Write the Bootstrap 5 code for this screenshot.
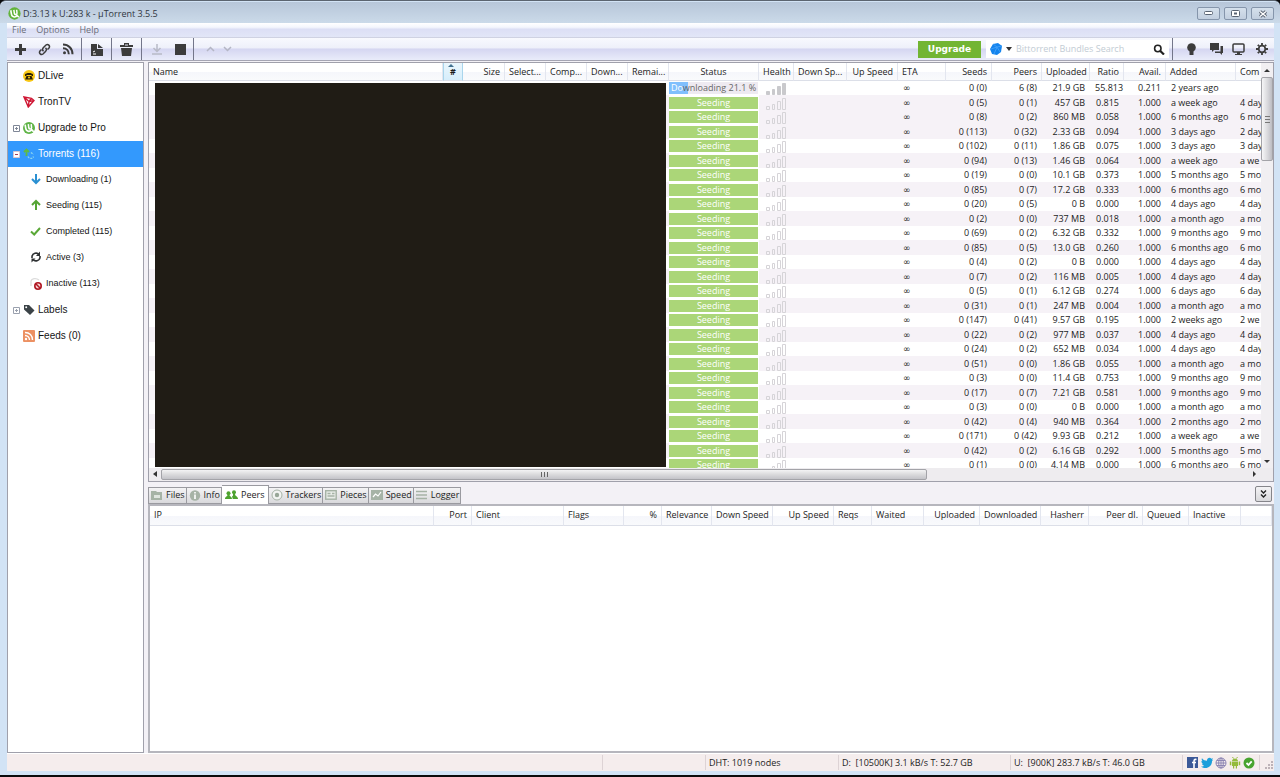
<!DOCTYPE html>
<html lang="en">
<head>
<meta charset="utf-8">
<meta name="viewport" content="width=device-width, initial-scale=1">
<title>µTorrent 3.5.5</title>
<link rel="stylesheet" href="https://cdn.jsdelivr.net/npm/bootstrap@5.3.0/dist/css/bootstrap.min.css">
<style>
  :root { --ui: "Open Sans", "Noto Sans", sans-serif; --ink: #1c1c1c; --edge: #a0a0ab; }
  body { font: 9px/12px var(--ui); color: var(--ink); background: #0a0a0c; height: 100vh; overflow: hidden; padding-bottom: 2px; }
  svg { display: block; flex: none; }
  button { padding: 0; border: 0; background: none; color: inherit; font: inherit; }
  a { color: inherit; text-decoration: none; }
  .frame { background: #d2e3f5; padding: 1px 6px 4px 7px; height: 100%; border-radius: 6px 6px 0 0; border-top: 1px solid #5b6470; }
  .titlebar { height: 21px; margin: 0 -6px 0 -7px; padding: 2px 6px 0 8px; gap: 2px; background: linear-gradient(#b7c6d9, #cbdae9); border-radius: 5px 5px 0 0; color: #30363e; }
  .winbtn { width: 23px; height: 13px; border: 1px solid #8595ab; border-radius: 2px; background: linear-gradient(#d5e0ec, #c2cfdf); }
  .menubar { height: 15px; background: linear-gradient(#fff 0, #f4f6fd 30%, #dcdff5 45%, #e2e6f7); padding-left: 5px; gap: 10px; color: #6c6f78; border-bottom: 1px solid #cfd2e2; }
  .tools { height: 23px; background: linear-gradient(#f8f9fe 0, #eef0fa 45%, #d5d6f1 50%, #e9ecfa); color: #3c3c3c; border-bottom: 1px solid #a5a5b3; }
  .tools button { width: 26px; }
  .tools .vr { width: 1px; background: #73768a; opacity: 1; }
  .upgrade { background: #72b533; color: #fff; font: bold 9px/16px "DejaVu Sans", sans-serif; width: 63px !important; height: 17px; }
  .finder { background: #fff; width: 183px; height: 18px; padding: 0 4px; margin: 0 3px 0 5px; }
  .finder input { border: 0; outline: 0; padding: 0; min-width: 0; font: 9px/14px var(--ui); background: none; }
  .finder input::placeholder { color: #c2ccd4; opacity: 1; }
  .finder button { width: auto; }
  .side { width: 137px; background: #fff; border: 1px solid var(--edge); font: 10px/26px "Liberation Sans", Arial, sans-serif; }
  .side a { height: 26px; padding-left: 5px; gap: 3px; color: #141414; }
  .side .kid { padding-left: 21px; padding-bottom: 2px; font-size: 9px; }
  .side .active { background: #3399fd; color: #fff; }
  .twist { width: 7px; height: 7px; }
  .cols { gap: 4px; background: #f3f1f6; padding-top: 1px; }
  .pane { background: #fff; border: 1px solid var(--edge); }
  .upper { height: 54vh; }
  .grid { table-layout: fixed; width: 100%; border-collapse: separate; border-spacing: 0; white-space: nowrap; }
  .grid th { font-weight: 400; height: 18px; padding: 0 4px; border-right: 1px solid #e3e6ef; border-bottom: 1px solid #dcdfe8; background: linear-gradient(#fff 50%, #f5f6fb 52%, #f9fafc); overflow: hidden; }
  .grid td { height: 15px; padding: 0 5px; line-height: 14px; overflow: hidden; }
  .grid tr:nth-child(odd) td { height: 14px; }
  .grid .tint td { background: #f6f2f7; }
  .grid .sorted { background: linear-gradient(#eaf6fd, #d6eefb); border-left: 1px solid #a9d5ec; border-right-color: #a9d5ec; font-weight: 700; padding: 0 4px; }
  .grid td.statecell { padding: 0 1px 0 0; background: #fff; }
  .grid td.health { padding: 0 0 0 7px; }
  .grid td.eta { font-family: "DejaVu Sans", sans-serif; }
  .state { height: 12px; line-height: 11px; background: #abd678; color: #fff; text-align: center; }
  .loading { background: linear-gradient(to right, #80bffd var(--done), #eeeaf1 var(--done)); color: #666; white-space: nowrap; }
  .loading span { color: #fff; }
  .hidden-names { background: #201c15; left: 6px; right: 607px; top: 20px; bottom: 14px; z-index: 2; }
  .vbar { width: 12px; background: #f1eff2; }
  .hbar { height: 13px; background: #eeecef; padding: 1px 12px 1px 4px; }
  .thumb { border: 1px solid #a3a3a8; border-radius: 2px; }
  .hbar .thumb { width: 766px; background: linear-gradient(#f3f3f4, #dadadc 50%, #c3c3c8); }
  .vbar .thumb { height: 84px; width: 12px; background: linear-gradient(to right, #f6f6f7, #d6d6da 60%, #bcbcc2); }
  .tabs { height: 22px; padding: 5px 2px 0 0; font-size: 9px; }
  .tabs button { height: 17px; padding: 0 1px 0 2px; gap: 3px; border: 1px solid #9a9aa0; border-left-width: 0; background: linear-gradient(#f4f3f5, #d9d9dc); }
  .tabs button:first-child { border-left-width: 1px; }
  .tabs .on { height: 19px; margin-top: -2px; background: #fff; border-bottom: 0; padding: 0 3px; }
  .tabs .collapser { width: 17px; height: 16px; margin-top: -1px; border: 1px solid #85858a; border-radius: 2px; padding: 0; }
  .lower { border-width: 2px; border-color: #b6b6bd; }
  .lower .grid th { height: 20px; }
  .statusbar { background: #f5eded; height: 18px; border-top: 1px solid #fff; }
  .statusbar > * { border-left: 1px solid #ddd3d5; padding-left: 3px; height: 15px; line-height: 15px; }
</style>
</head>
<body>
<div class="frame d-flex flex-column">
  <header class="titlebar d-flex align-items-center">
    <svg width="13" height="13" viewBox="0 0 14 14"><circle cx="7" cy="7" r="6.6" fill="#62b33b"/><path d="M3 3.500l.7 4.200c.8 4 5 3.600 6 1.300l2 2" fill="none" stroke="#fff" stroke-width="1.700"/><path d="M6.300 3l.6 4c.4 1.600 3 1.400 2.800-.5L9.300 3" fill="none" stroke="#fff" stroke-width="1.600"/></svg>
    <span class="me-auto">D:3.13 k U:283 k - µTorrent 3.5.5</span>
    <div class="d-flex gap-1">
      <button class="winbtn d-flex align-items-center justify-content-center" aria-label="Minimize"><svg width="9" height="5"><rect x=".5" y=".5" width="8" height="3" rx="1" fill="#fff" stroke="#596372"/></svg></button>
      <button class="winbtn d-flex align-items-center justify-content-center" aria-label="Maximize"><svg width="9" height="7"><rect x=".5" y=".5" width="8" height="6" rx="1" fill="#fff" stroke="#596372"/><path d="M3 3.500h3" stroke="#596372" stroke-width="2"/></svg></button>
      <button class="winbtn d-flex align-items-center justify-content-center" aria-label="Close"><svg width="10" height="8"><path d="M2 1.500l6 5M8 1.500l-6 5" stroke="#596372" stroke-width="3.400"/><path d="M2 1.500l6 5M8 1.500l-6 5" stroke="#fff" stroke-width="1.500"/></svg></button>
    </div>
  </header>
  <nav class="menubar d-flex align-items-center" aria-label="Menu"><a href="#">File</a><a href="#">Options</a><a href="#">Help</a></nav>

  <div class="tools d-flex align-items-center flex-shrink-0">
    <button class="d-flex justify-content-center" aria-label="Add torrent"><svg width="13" height="13"><path d="M6.500 1v11M1 6.500h11" stroke="currentColor" stroke-width="3"/></svg></button>
    <button class="d-flex justify-content-center" style="width:22px" aria-label="Add from URL"><svg width="13" height="13" viewBox="0 0 13 13" fill="none" stroke="currentColor" stroke-width="1.500"><path d="M5.500 8.200C4 6.800 4.500 5.500 5.500 4.500L8 2c2-1.500 4.500.8 3 3L9.500 6.500"/><path d="M7.500 4.800C9 6.200 8.500 7.500 7.500 8.500L5 11c-2 1.500-4.500-.8-3-3l1.500-1.500"/></svg></button>
    <button class="d-flex justify-content-center" aria-label="Add RSS feed"><svg width="12" height="12" fill="none" stroke="currentColor" stroke-width="2"><circle cx="2.500" cy="9.800" r="1.500" fill="currentColor" stroke="none"/><path d="M1 5.200c3.500 0 5.800 2.500 5.800 6M1 1.500c5.500 0 9.500 4 9.500 9.700"/></svg></button>
    <span class="vr"></span>
    <button class="d-flex justify-content-center" style="width:29px" aria-label="Create torrent"><svg width="12" height="13"><path d="M0 1h6v5h6v7H0zM7 1l5 4H7z" fill="currentColor"/><path d="M2 9l2-1M2 11h3" stroke="#fff"/></svg></button>
    <span class="vr"></span>
    <button class="d-flex justify-content-center" style="width:29px" aria-label="Remove"><svg width="13" height="13"><path d="M0 2h4V0h5v2h4v2H0zM1 5h11l-1 8H2z" fill="currentColor"/><path d="M5 2h3" stroke="#e8e9f7"/></svg></button>
    <span class="vr"></span>
    <button class="d-flex justify-content-center" style="width:29px" aria-label="Start"><svg width="12" height="12" fill="none" stroke="#b8bac6" stroke-width="1.500"><path d="M6 1v7M2.500 5L6 8.500 9.500 5M1 11h10"/></svg></button>
    <button class="d-flex ps-1" style="width:22px" aria-label="Stop"><svg width="11" height="11"><path d="M0 0h11v11H0z" fill="currentColor"/></svg></button>
    <span class="vr"></span>
    <button class="d-flex justify-content-end" style="width:21px" aria-label="Move up"><svg width="9" height="6" fill="none" stroke="#b4b6c4" stroke-width="1.500"><path d="M1 5l3.500-3.500L8 5"/></svg></button>
    <button class="d-flex ms-2 me-auto" aria-label="Move down"><svg width="9" height="6" fill="none" stroke="#b4b6c4" stroke-width="1.500"><path d="M1 1l3.500 3.500L8 1"/></svg></button>
    <button class="upgrade">Upgrade</button>
    <form class="finder d-flex align-items-center" onsubmit="return false">
      <svg width="12" height="12"><path d="M3 1l5-1 4 3-1 6-4 3-5-1-2-5z" fill="#1484ee"/><path d="M3 1l4 3 5-1M7 4l3 5M1 6l6-2-3 7" stroke="#3c9df7" fill="none"/></svg>
      <svg class="mx-1" width="6" height="4"><path d="M0 0h6L3 4z" fill="#333"/></svg>
      <input class="flex-grow-1" type="search" aria-label="Search" placeholder="Bittorrent Bundles Search">
      <button aria-label="Search"><svg width="12" height="11"><circle cx="4.800" cy="4.500" r="3.200" fill="none" stroke="#222" stroke-width="1.600"/><path d="M7 6.800l4 3.700" stroke="#222" stroke-width="2.200"/></svg></button>
    </form>
    <span class="vr"></span>
    <button class="d-flex justify-content-center" style="width:37px" aria-label="Tips"><svg width="9" height="12"><circle cx="4.500" cy="4.500" r="4.300" fill="currentColor"/><path d="M2.500 7h4v5h-4z" fill="currentColor"/></svg></button>
    <button class="d-flex" style="width:22px" aria-label="Chat"><svg width="13" height="12"><path d="M0 0h9v7H4L2 9V7H0z" fill="currentColor"/><path d="M10.500 3H13v7h-1v2l-2-2H5V8.500h5.500z" fill="currentColor"/></svg></button>
    <button class="d-flex" style="width:24px" aria-label="Remote"><svg width="13" height="12"><rect x="1" y="1" width="11" height="8" rx="1" fill="none" stroke="currentColor" stroke-width="1.500"/><path d="M5 9h3v2h2v1H3v-1h2z" fill="currentColor"/></svg></button>
    <button class="d-flex" style="width:18px" aria-label="Preferences"><svg width="12" height="12"><circle cx="6" cy="6" r="3.300" fill="none" stroke="currentColor" stroke-width="1.700"/><path d="M6 0v2M6 10v2M0 6h2M10 6h2M1.800 1.800l1.400 1.400M8.800 8.800l1.400 1.400M10.200 1.800L8.800 3.200M1.800 10.200l1.400-1.400" stroke="currentColor" stroke-width="1.800"/></svg></button>
  </div>

  <div class="cols d-flex flex-grow-1" style="min-height:0">
    <nav class="side flex-shrink-0" aria-label="Categories">
      <a href="#" class="d-flex align-items-center"><span class="twist"></span><svg width="12" height="12"><circle cx="6" cy="6" r="6" fill="#f8c715"/><path d="M2 4.500C3 2.500 9 2.500 10 4.500V6H8.500V5h-5v1H2zM3.500 6h5L10 9.500H2z" fill="#2b2106"/><circle cx="6" cy="7.500" r="1" fill="#f8c715"/></svg>DLive</a>
      <a href="#" class="d-flex align-items-center"><span class="twist"></span><svg width="12" height="12" fill="none" stroke="#cf1633" stroke-width="1.400"><path d="M1 1l7.500 1.300L11 4.500 5.300 11zM1 1l5 4.500M6 5.500l2.500-3.200M6 5.500L11 4.500M6 5.500l-.7 5.500"/></svg>TronTV</a>
      <a href="#" class="d-flex align-items-center"><svg class="twist" viewBox="0 0 7 7"><path d="M.5.5h6v6h-6zM2 3.500h3M3.500 2v3" fill="#fff" stroke="#7f8797"/></svg><svg width="12" height="12" viewBox="0 0 14 14"><circle cx="7" cy="7" r="7" fill="#5fb446"/><path d="M2.500 3l.7 4.500c.8 4.500 5.800 4 7 1.500l2.300 2.500" fill="none" stroke="#fff" stroke-width="1.900"/><path d="M6.200 2.500l.6 4.500c.4 1.800 3.400 1.600 3.200-.5L9.600 2.500" fill="none" stroke="#fff" stroke-width="1.800"/></svg>Upgrade to Pro</a>
      <a href="#" class="active d-flex align-items-center"><svg class="twist" viewBox="0 0 7 7"><path d="M.5.5h6v6h-6z" fill="#fff" stroke="#d8c5cf"/><path d="M2 3.500h3" stroke="#a4405c"/></svg><svg width="12" height="12" fill="none"><path d="M3.500 8V2M1 4l2.500-2.500L6 4" stroke="#5fba45" stroke-width="1.800"/><path d="M8 4.500l2.500 2M5 8.500c1 2.500 5 2.500 5.500 0" stroke="#8bd5ef" stroke-dasharray="2 1" stroke-width="1.300"/></svg>Torrents (116)</a>
      <a href="#" class="kid d-flex align-items-center"><svg width="14" height="12" fill="none" stroke="#2a90d2" stroke-width="2"><path d="M7 1v9M3 6l4 4 4-4"/></svg>Downloading (1)</a>
      <a href="#" class="kid d-flex align-items-center"><svg width="14" height="12" fill="none" stroke="#55a534" stroke-width="2"><path d="M7 11V2M3 6l4-4 4 4"/></svg>Seeding (115)</a>
      <a href="#" class="kid d-flex align-items-center"><svg width="14" height="12" fill="none" stroke="#5aa837" stroke-width="2"><path d="M2 6.500L5.200 9.500 11 3"/></svg>Completed (115)</a>
      <a href="#" class="kid d-flex align-items-center"><svg width="14" height="12" fill="none" stroke="#2e3133" stroke-width="1.600"><path d="M3 7V5.500C3.500 2 8 1 10 3.500M11 5v1.500C10.500 10 6 11 4 8.500"/><path d="M11 .5V5H7zM2.500 11.500V7.500H6.500z" fill="#2e3133" stroke="none"/></svg>Active (3)</a>
      <a href="#" class="kid d-flex align-items-center"><svg width="14" height="13" fill="none"><path d="M2 9V4c.5-2.500 5-3.500 8-1" stroke="#dcdcdc" stroke-width="1.300"/><circle cx="9" cy="9" r="3.200" fill="#f6d5d5" stroke="#b01722" stroke-width="1.600"/><path d="M7 7l4 4" stroke="#b01722" stroke-width="1.600"/></svg>Inactive (113)</a>
      <a href="#" class="d-flex align-items-center"><svg class="twist" viewBox="0 0 7 7"><path d="M.5.5h6v6h-6zM2 3.500h3M3.500 2v3" fill="#fff" stroke="#9aa1ae"/></svg><svg width="12" height="12"><path d="M1 1h5l5.500 5.500-4.500 4.500L1 5.500z" fill="#3b4347"/><circle cx="3.200" cy="3.200" r="1" fill="#fff"/></svg>Labels</a>
      <a href="#" class="d-flex align-items-center"><span class="twist"></span><svg width="12" height="12" fill="none" stroke="#fff" stroke-width="1.400"><rect width="12" height="12" rx="1" fill="#ec9163" stroke="none"/><circle cx="3" cy="9" r="1.200" fill="#fff" stroke="none"/><path d="M2 5.500c2.500 0 4.500 2 4.500 4.500M2 2.500c4.500 0 7.500 3 7.500 7.500"/></svg>Feeds (0)</a>
    </nav>

    <main class="d-flex flex-column flex-grow-1" style="min-width:0">
      <section class="pane upper d-flex flex-column position-relative flex-shrink-0">
        <div class="d-flex flex-grow-1" style="min-height:0">
          <div class="flex-grow-1 overflow-hidden">
            <table class="grid">
              <colgroup id="torrentCols"></colgroup>
              <thead><tr>
                <th>Name</th><th class="sorted text-center position-relative"><svg class="position-absolute top-0" width="6" height="4"><path d="M0 4l3-3 3 3z" fill="#41708f"/></svg>#</th><th class="text-end">Size</th><th>Select...</th><th>Comp...</th><th>Down...</th><th>Remai...</th><th class="text-center">Status</th><th>Health</th><th>Down Sp...</th><th class="text-end">Up Speed</th><th>ETA</th><th class="text-end">Seeds</th><th class="text-end">Peers</th><th class="text-end">Uploaded</th><th class="text-end">Ratio</th><th class="text-end">Avail.</th><th>Added</th><th class="pe-0 border-end-0">Com</th>
              </tr></thead>
              <tbody id="torrents"></tbody>
            </table>
          </div>
          <div class="vbar d-flex flex-column align-items-center flex-shrink-0">
            <svg class="my-1" width="6" height="6"><path d="M0 5l3-3 3 3z" fill="#333"/></svg>
            <div class="thumb d-flex align-items-center justify-content-center"><svg width="5" height="7"><path d="M0 .5h5M0 3.500h5M0 6.500h5" stroke="#777"/></svg></div>
            <svg class="mt-auto mb-1" width="6" height="4"><path d="M0 0h6L3 3z" fill="#333"/></svg>
          </div>
        </div>
        <div class="hbar d-flex align-items-center flex-shrink-0">
          <svg class="me-1" width="4" height="6"><path d="M4 0v6L0 3z" fill="#333"/></svg>
          <div class="thumb h-100 d-flex align-items-center justify-content-center"><svg width="7" height="5"><path d="M.5 0v5M3.500 0v5M6.500 0v5" stroke="#666"/></svg></div>
          <svg class="ms-auto me-1" width="4" height="6"><path d="M0 0v6l3-3z" fill="#333"/></svg>
        </div>
        <div class="hidden-names position-absolute"></div>
      </section>

      <div class="tabs d-flex align-items-start flex-shrink-0" role="tablist">
        <button role="tab" class="d-flex align-items-center"><svg width="12" height="10"><path d="M0 1h5l1 1h5v8H0z" fill="#a6b3a6"/><path d="M3 5h6v3H3z" fill="#dfe5df"/></svg>Files</button>
        <button role="tab" class="d-flex align-items-center"><svg width="12" height="11"><circle cx="6" cy="5.500" r="5.200" fill="#a6b3a6"/><path d="M6 2v1.500M6 4.500V9" stroke="#fff" stroke-width="1.600"/></svg>Info</button>
        <button role="tab" aria-selected="true" class="on d-flex align-items-center"><svg width="13" height="10" fill="#4ea32f"><circle cx="3.500" cy="3.200" r="2"/><path d="M0 9c0-2.500 2-2 2.500-4h2C5 7 7 6.500 7 9z"/><circle cx="9" cy="2.200" r="2"/><path d="M7 6.500c1-.5 1-1 1-2.500h2c.5 3 3 2 3 5H7.800z"/></svg>Peers</button>
        <button role="tab" class="d-flex align-items-center"><svg width="12" height="12"><circle cx="6" cy="6" r="5" fill="#f2f3f2" stroke="#a6b3a6"/><circle cx="6" cy="6" r="2.200" fill="#97a697"/></svg>Trackers</button>
        <button role="tab" class="d-flex align-items-center"><svg width="12" height="10"><rect x=".7" y=".7" width="10.500" height="8.500" fill="#e8ece8" stroke="#a6b3a6" stroke-width="1.400"/><path d="M2.500 3.500h3M7 3.500h2.500M2.500 6h7" stroke="#a6b3a6" stroke-width="1.300"/></svg>Pieces</button>
        <button role="tab" class="d-flex align-items-center"><svg width="12" height="10"><path d="M0 0h12v10H0z" fill="#a6b3a6"/><path d="M2 7l2.500-3 2.500 2 3-4" fill="none" stroke="#fff" stroke-width="1.200"/></svg>Speed</button>
        <button role="tab" class="d-flex align-items-center"><svg width="12" height="10"><path d="M0 1.500h11M0 5h11M0 8.500h11" stroke="#a6b3a6" stroke-width="1.600"/></svg>Logger</button>
        <button class="collapser ms-auto d-flex align-items-center justify-content-center" aria-label="Collapse details"><svg width="7" height="8" fill="none" stroke="#222" stroke-width="1.400"><path d="M1 .5L3.500 3 6 .5M1 4.500L3.500 7 6 4.500"/></svg></button>
      </div>

      <section class="pane lower flex-grow-1 overflow-hidden">
        <table class="grid">
          <colgroup id="peerCols"></colgroup>
          <thead><tr>
            <th>IP</th><th class="text-end">Port</th><th>Client</th><th>Flags</th><th class="text-end">%</th><th class="text-end">Relevance</th><th class="text-end">Down Speed</th><th class="text-end">Up Speed</th><th>Reqs</th><th>Waited</th><th class="text-end">Uploaded</th><th class="text-end">Downloaded</th><th class="text-end">Hasherr</th><th class="text-end">Peer dl.</th><th>Queued</th><th>Inactive</th><th></th>
          </tr></thead>
        </table>
      </section>
    </main>
  </div>

  <footer class="statusbar d-flex align-items-center flex-shrink-0">
    <span class="ms-auto" style="width:103px"></span>
    <span style="width:133px">DHT: 1019 nodes</span>
    <span style="width:172px">D:&nbsp; [10500K] 3.1 kB/s T: 52.7 GB</span>
    <span style="width:172px">U:&nbsp; [900K] 283.7 kB/s T: 46.0 GB</span>
    <span class="d-flex align-items-center ps-1" style="width:77px;gap:2px">
      <a href="#" aria-label="Facebook"><svg width="12" height="12"><path d="M0 0h11v11H0z" fill="#3b5998"/><path d="M9.500 2.500C7 2 7 3.500 7 5v6M5 5.500h4" fill="none" stroke="#fff" stroke-width="1.600"/></svg></a>
      <a href="#" aria-label="Twitter"><svg width="12" height="12"><path d="M0 9.500c2 .2 2.500-.3 3-.8C1.800 8.500 1.200 7.500 1 6.800h1C.8 6 .3 5 .5 4l1 .3C.5 3 .5 2 1 1.200c1.500 1.800 3 2.400 5 2.600C5.800 1 9-.2 10.300 1.800L12 1.200 11 3l1-.2-1 1.400C11 10 5 13 0 9.500z" fill="#1c9fdb"/></svg></a>
      <a href="#" aria-label="Website"><svg width="12" height="12" fill="none" stroke="#8d86b4"><circle cx="6" cy="6" r="5"/><ellipse cx="6" cy="6" rx="2.300" ry="5"/><path d="M1 6h10M2 3.500h8M2 8.500h8M6 1v10"/></svg></a>
      <a href="#" aria-label="Android"><svg width="12" height="12" fill="#94bb3c"><path d="M3 4c.3-3.500 5.700-3.500 6 0zM3 4.500h6V9H8v2.500H6.800V9H5.200v2.500H4V9H3zM.8 4.500h1.500v3.700H.8zM9.700 4.500h1.500v3.700H9.700z"/><path d="M3.500 0l1 1.500M8.500 0l-1 1.500" stroke="#94bb3c"/></svg></a>
      <svg width="12" height="12"><circle cx="6" cy="6" r="5.500" fill="#47a42f"/><path d="M3.500 6l2 2 3.200-3.700" fill="none" stroke="#fff" stroke-width="1.800"/></svg>
    </span>
    <span class="d-flex justify-content-end align-items-end" style="width:15px"><svg width="9" height="9" fill="#bdb3b8"><path d="M6 0h2v2H6zM6 3h2v2H6zM6 6h2v2H6zM3 3h2v2H3zM3 6h2v2H3zM0 6h2v2H0z"/></svg></span>
  </footer>
</div>

<script src="https://cdn.jsdelivr.net/npm/bootstrap@5.3.0/dist/js/bootstrap.bundle.min.js"></script>
<script>
  // The first column of each table takes the free width.
  const setCols = (id, widths) => {
    document.getElementById(id).innerHTML = '<col>' + widths.map(w => `<col style="width:${w}px">`).join('');
  };
  setCols('torrentCols', [20, 42, 41, 41, 41, 41, 90, 35, 53, 51, 48, 46, 50, 48, 34, 42, 70, 25]);
  setCols('peerCols', [38, 92, 60, 38, 50, 61, 61, 38, 52, 56, 61, 48, 54, 46, 52, 31]);

  // seeds, peers, uploaded, ratio, availability, added, completed (short form)
  const rows = `0|6 (8)|21.9 GB|55.813|0.211|2 years|
5|0 (1)|457 GB|0.815|1.000|a week|4 day
8|0 (2)|860 MB|0.058|1.000|6 months|6 mo
113|0 (32)|2.33 GB|0.094|1.000|3 days|2 day
102|0 (11)|1.86 GB|0.075|1.000|3 days|3 day
94|0 (13)|1.46 GB|0.064|1.000|a week|a we
19|0 (0)|10.1 GB|0.373|1.000|5 months|5 mo
85|0 (7)|17.2 GB|0.333|1.000|6 months|6 mo
20|0 (5)|0 B|0.000|1.000|4 days|4 day
2|0 (0)|737 MB|0.018|1.000|a month|a mo
69|0 (2)|6.32 GB|0.332|1.000|9 months|9 mo
85|0 (5)|13.0 GB|0.260|1.000|6 months|6 mo
4|0 (2)|0 B|0.000|1.000|4 days|4 day
7|0 (2)|116 MB|0.005|1.000|4 days|4 day
5|0 (1)|6.12 GB|0.274|1.000|6 days|6 day
31|0 (1)|247 MB|0.004|1.000|a month|a mo
147|0 (41)|9.57 GB|0.195|1.000|2 weeks|2 we
22|0 (2)|977 MB|0.037|1.000|4 days|4 day
24|0 (2)|652 MB|0.034|1.000|4 days|4 day
51|0 (0)|1.86 GB|0.055|1.000|a month|a mo
3|0 (0)|11.4 GB|0.753|1.000|9 months|9 mo
17|0 (7)|7.21 GB|0.581|1.000|9 months|9 mo
3|0 (0)|0 B|0.000|1.000|a month|a mo
42|0 (4)|940 MB|0.364|1.000|2 months|2 mo
171|0 (42)|9.93 GB|0.212|1.000|a week|a we
42|0 (2)|6.16 GB|0.292|1.000|5 months|5 mo
1|0 (0)|4.14 MB|0.000|1.000|6 months|6 mo`.split('\n').map(r => r.split('|'));

  const bars = solid => `<svg width="22" height="14" fill="${solid ? '#c9c9cc' : 'none'}" stroke="${solid ? '#c9c9cc' : '#d6d4d8'}"><path d="M.5 10.500h3v3h-3zM6.500 8.500h2v5h-2zM11.500 5.500h3v8h-3zM16.500 2.500h3v11h-3z"/></svg>`;
  document.getElementById('torrents').innerHTML = rows.map((r, i) => {
    const [seeds, peers, up, ratio, avail, added, done] = r;
    const state = i ? '<div class="state">Seeding</div>'
      : '<div class="state loading" style="--done:21.1%"><span>Do</span>wnloading 21.1 %</div>';
    const end = [`0 (${seeds})`, peers, up, ratio, avail].map(t => `<td class="text-end">${t}</td>`).join('');
    return `<tr class="${i % 2 || i === 2 ? 'tint' : ''}">${'<td></td>'.repeat(7)}<td class="statecell">${state}</td>` +
      `<td class="health">${bars(!i)}</td><td></td><td></td><td class="eta">∞</td>${end}<td>${added} ago</td><td class="px-0 ps-1">${done}</td></tr>`;
  }).join('');
</script>
</body>
</html>
